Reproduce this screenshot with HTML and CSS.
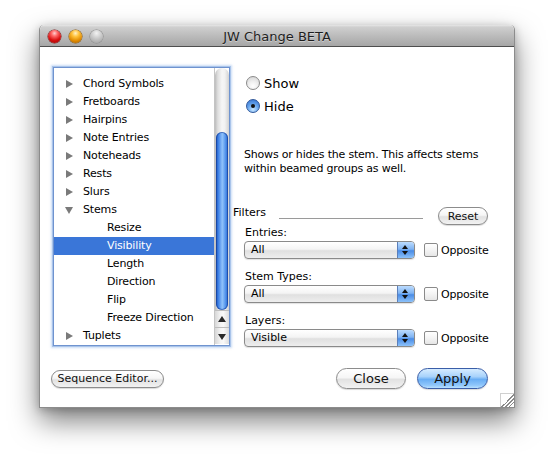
FILE: index.html
```html
<!DOCTYPE html>
<html>
<head>
<meta charset="utf-8">
<title>JW Change BETA</title>
<link rel="stylesheet" href="styles.css">
</head>
<body>
<div class="window">
  <div class="titlebar">
    <div class="lights">
      <span class="light red"></span>
      <span class="light yellow"></span>
      <span class="light gray"></span>
    </div>
    <div class="title">JW Change BETA</div>
  </div>
  <div class="content">
    <div class="main">
      <div class="listbox">
        <ul class="tree">
          <li class="row"><span class="tri closed"></span>Chord Symbols</li>
          <li class="row"><span class="tri closed"></span>Fretboards</li>
          <li class="row"><span class="tri closed"></span>Hairpins</li>
          <li class="row"><span class="tri closed"></span>Note Entries</li>
          <li class="row"><span class="tri closed"></span>Noteheads</li>
          <li class="row"><span class="tri closed"></span>Rests</li>
          <li class="row"><span class="tri closed"></span>Slurs</li>
          <li class="row"><span class="tri open"></span>Stems</li>
          <li class="row child">Resize</li>
          <li class="row child selected">Visibility</li>
          <li class="row child">Length</li>
          <li class="row child">Direction</li>
          <li class="row child">Flip</li>
          <li class="row child">Freeze Direction</li>
          <li class="row"><span class="tri closed"></span>Tuplets</li>
        </ul>
        <div class="scrollbar">
          <div class="track"><div class="thumb"></div></div>
          <div class="arrow up"><span></span></div>
          <div class="arrow down"><span></span></div>
        </div>
      </div>
      <div class="panel">
        <div class="radios">
          <label class="radio-row"><span class="radio"></span>Show</label>
          <label class="radio-row"><span class="radio checked"></span>Hide</label>
        </div>
        <p class="desc">Shows or hides the stem. This affects stems within beamed groups as well.</p>
        <div class="filters-head">
          <span class="filters-label">Filters</span>
          <span class="rule"></span>
          <button class="btn small reset">Reset</button>
        </div>
        <div class="group">
          <div class="glabel">Entries:</div>
          <div class="grow">
            <div class="popup"><span class="ptext">All</span><span class="pcap"><i class="pu"></i><i class="pd"></i></span></div>
            <span class="check"></span><span class="clabel">Opposite</span>
          </div>
        </div>
        <div class="group">
          <div class="glabel">Stem Types:</div>
          <div class="grow">
            <div class="popup"><span class="ptext">All</span><span class="pcap"><i class="pu"></i><i class="pd"></i></span></div>
            <span class="check"></span><span class="clabel">Opposite</span>
          </div>
        </div>
        <div class="group">
          <div class="glabel">Layers:</div>
          <div class="grow">
            <div class="popup"><span class="ptext">Visible</span><span class="pcap"><i class="pu"></i><i class="pd"></i></span></div>
            <span class="check"></span><span class="clabel">Opposite</span>
          </div>
        </div>
      </div>
    </div>
    <div class="footer">
      <button class="btn small seq">Sequence Editor...</button>
      <span class="spacer"></span>
      <button class="btn big close">Close</button>
      <button class="btn big apply">Apply</button>
    </div>
    <div class="grip"></div>
  </div>
</div>
</body>
</html>
```
FILE: styles.css
```css
* { box-sizing: border-box; }
html, body { margin: 0; padding: 0; background: #fff; }
body {
  font-family: "DejaVu Sans", "Lucida Grande", sans-serif;
  font-size: 11px;
  color: #000;
  width: 554px;
  height: 462px;
  overflow: hidden;
}

.window {
  margin: 25px 0 0 39px;
  width: 476px;
  background: #fff;
  border: 1px solid rgba(0,0,0,0.45);
  border-top: none;
  border-radius: 5px 5px 0 0;
  box-shadow: 0 13px 28px rgba(0,0,0,0.5), 0 2px 8px rgba(0,0,0,0.22);
}

.titlebar {
  position: relative;
  height: 22px;
  border-radius: 5px 5px 0 0;
  background: linear-gradient(#e6e6e6 0%, #cfcfcf 10%, #bcbcbc 50%, #a6a6a6 100%);
  border-bottom: 1px solid #4e4e4e;
  display: flex;
  align-items: center;
  justify-content: center;
}
.lights {
  position: absolute;
  left: 8px;
  top: 5px;
  display: flex;
  gap: 8px;
}
.light {
  width: 13px;
  height: 13px;
  border-radius: 50%;
  display: block;
}
.light.red {
  background: radial-gradient(circle at 50% 25%, #ffd0d0 0%, #ff6a6a 25%, #d81010 60%, #9a0000 100%);
  box-shadow: 0 0 0 0.5px #7a2020;
}
.light.yellow {
  background: radial-gradient(circle at 50% 25%, #fff2c8 0%, #ffc23a 30%, #e08a00 65%, #a05a00 100%);
  box-shadow: 0 0 0 0.5px #8a5a10;
}
.light.gray {
  background: radial-gradient(circle at 50% 25%, #f2f2f2 0%, #d2d2d2 35%, #b4b4b4 70%, #999 100%);
  box-shadow: 0 0 0 0.5px #8a8a8a;
}
.title {
  font-size: 13px;
  color: #1e1e1e;
  text-shadow: 0 1px 0 rgba(255,255,255,0.4);
  padding-top: 1px;
}

.content {
  position: relative;
  height: 360px;
  padding: 20px 0 0 13px;
}

.main {
  display: flex;
  align-items: flex-start;
}

.listbox {
  display: flex;
  width: 177px;
  height: 279px;
  border: 1px solid #6f93cf;
  box-shadow: 0 0 0 1px #a9c4ea, 0 0 2px 2px rgba(150,185,235,0.5);
  background: #fff;
  overflow: hidden;
}
.tree {
  list-style: none;
  margin: 0;
  padding: 7px 0 0 0;
  width: 160px;
}
.row {
  height: 18px;
  line-height: 18px;
  display: flex;
  align-items: center;
  padding-left: 11px;
  white-space: nowrap;
  letter-spacing: -0.15px;
}
.row.child { padding-left: 53px; }
.row.selected { background: #3a76d8; color: #fff; }
.tri {
  width: 18px;
  height: 18px;
  position: relative;
  flex: none;
}
.tri.closed::before {
  content: "";
  position: absolute;
  left: 1px;
  top: 5px;
  border-left: 7px solid #7a7a7a;
  border-top: 4px solid transparent;
  border-bottom: 4px solid transparent;
}
.tri.open::before {
  content: "";
  position: absolute;
  left: 0;
  top: 6px;
  border-top: 7px solid #7a7a7a;
  border-left: 4px solid transparent;
  border-right: 4px solid transparent;
}

.scrollbar {
  width: 15px;
  display: flex;
  flex-direction: column;
  border-left: 1px solid #c4c4c4;
}
.track {
  height: 242px;
  padding-top: 64px;
  background: linear-gradient(90deg, #bdbdbd 0%, #dedede 20%, #f6f6f6 50%, #f2f2f2 70%, #d2d2d2 100%);
  border-radius: 7px 7px 0 0;
  position: relative;
}
.thumb {
  height: 178px;
  margin: 0 1px;
  border-radius: 7px;
  background: linear-gradient(90deg, #1d4fae 0%, #3a7ee6 18%, #7fb4f6 45%, #8cc0fa 55%, #4c8eea 82%, #2660c4 100%);
  box-shadow: inset 0 0 0 1px rgba(20,60,150,0.6);
}
.arrow {
  height: 17px;
  position: relative;
  background: linear-gradient(90deg, #d7d7d7 0%, #f4f4f4 40%, #f9f9f9 60%, #dcdcdc 100%);
  border-top: 1px solid #bdbdbd;
}
.arrow span {
  position: absolute;
  left: 3px;
  top: 5px;
  border-left: 4px solid transparent;
  border-right: 4px solid transparent;
}
.arrow.up span { border-bottom: 6px solid #2a2a2a; }
.arrow.down span { border-top: 6px solid #2a2a2a; top: 6px; }

.panel {
  width: 256px;
  margin-left: 3px;
  padding-top: 9px;
}
.radios {
  margin-left: 13px;
  display: flex;
  flex-direction: column;
  gap: 9px;
}
.radio-row {
  display: flex;
  align-items: center;
  height: 14px;
  font-size: 13px;
}
.radio {
  width: 14px;
  height: 14px;
  border-radius: 50%;
  margin-right: 4px;
  border: 1px solid #8a8a8a;
  background: radial-gradient(circle at 50% 75%, #ffffff 0%, #f0f0f0 40%, #d0d0d0 100%);
  position: relative;
  flex: none;
}
.radio.checked {
  border-color: #30589a;
  background: radial-gradient(circle at 50% 80%, #c8e6ff 0%, #6aa8ee 45%, #2e6ccc 100%);
}
.radio.checked::after {
  content: "";
  position: absolute;
  left: 4px;
  top: 4px;
  width: 4px;
  height: 4px;
  border-radius: 50%;
  background: #111;
}
.desc {
  margin: 35px 0 0 11px;
  line-height: 14px;
  letter-spacing: -0.2px;
  width: 250px;
}

.filters-head {
  margin-top: 29px;
  height: 20px;
  display: grid;
  grid-template-columns: 46px 144px 1fr;
  align-items: start;
}
.filters-label {
  line-height: 14px;
  margin-top: 1px;
}
.rule {
  margin-top: 13px;
  border-top: 1px solid #9a9a9a;
}
.reset {
  justify-self: end;
  margin-top: 2px;
  margin-right: 1px;
  width: 50px;
}

.btn {
  font-family: "DejaVu Sans", "Lucida Grande", sans-serif;
  color: #111;
  border: 1px solid #8c8c8c;
  background: linear-gradient(#ffffff 0%, #f6f6f6 45%, #e2e2e2 55%, #f2f2f2 100%);
  border-radius: 10px;
  padding: 0;
  box-shadow: 0 1px 1px rgba(0,0,0,0.15);
  display: flex;
  align-items: center;
  justify-content: center;
}
.btn.small { height: 18px; font-size: 11px; }
.btn.big { height: 21px; font-size: 13px; border-radius: 11px; }

.group { margin-top: 1px; }
.group + .group { margin-top: 11px; }
.glabel {
  line-height: 14px;
  padding-left: 12px;
}
.grow {
  margin-top: 1px;
  margin-left: 11px;
  display: flex;
  align-items: center;
  height: 18px;
}
.popup {
  width: 171px;
  height: 18px;
  border: 1px solid #8a8a8a;
  border-radius: 4px;
  display: flex;
  overflow: hidden;
  background: linear-gradient(#ffffff 0%, #f4f4f4 45%, #e0e0e0 55%, #eeeeee 100%);
  box-shadow: 0 1px 1px rgba(0,0,0,0.12);
}
.ptext {
  flex: 1;
  padding-left: 6px;
  line-height: 16px;
}
.pcap {
  width: 17px;
  position: relative;
  border-left: 1px solid #5b7fba;
  background: linear-gradient(#bcdcff 0%, #7fb3f2 45%, #4a8ce6 55%, #8cc2fa 100%);
}
.pcap i {
  position: absolute;
  left: 4px;
  border-left: 3px solid transparent;
  border-right: 3px solid transparent;
}
.pcap .pu { top: 3px; border-bottom: 4px solid #111; }
.pcap .pd { top: 9px; border-top: 4px solid #111; }
.check {
  width: 14px;
  height: 14px;
  margin-left: 9px;
  border: 1px solid #8a8a8a;
  border-radius: 2px;
  background: linear-gradient(#ffffff 0%, #f4f4f4 50%, #e6e6e6 100%);
  flex: none;
}
.clabel {
  margin-left: 3px;
  letter-spacing: -0.2px;
}

.footer {
  margin-top: 21px;
  margin-left: -2px;
  width: 437px;
  display: flex;
  align-items: center;
}
.seq { width: 113px; height: 21px; border-radius: 11px; }
.spacer { flex: 1; }
.close { width: 70px; }
.apply {
  width: 71px;
  margin-left: 11px;
  border-color: #3a5ea8;
  background: linear-gradient(#d6ecff 0%, #a8d2fb 40%, #6aaef4 55%, #8fc6fb 85%, #b8e0ff 100%);
}

.grip {
  position: absolute;
  right: 0;
  bottom: 0;
  width: 14px;
  height: 14px;
  border-left: 1px solid #d0d0d0;
  border-top: 1px solid #d0d0d0;
  background:
    linear-gradient(135deg, transparent 0 50%, #8a8a8a 50% 56%, transparent 56% 64%, #8a8a8a 64% 70%, transparent 70% 78%, #8a8a8a 78% 84%, transparent 84%);
}
```
